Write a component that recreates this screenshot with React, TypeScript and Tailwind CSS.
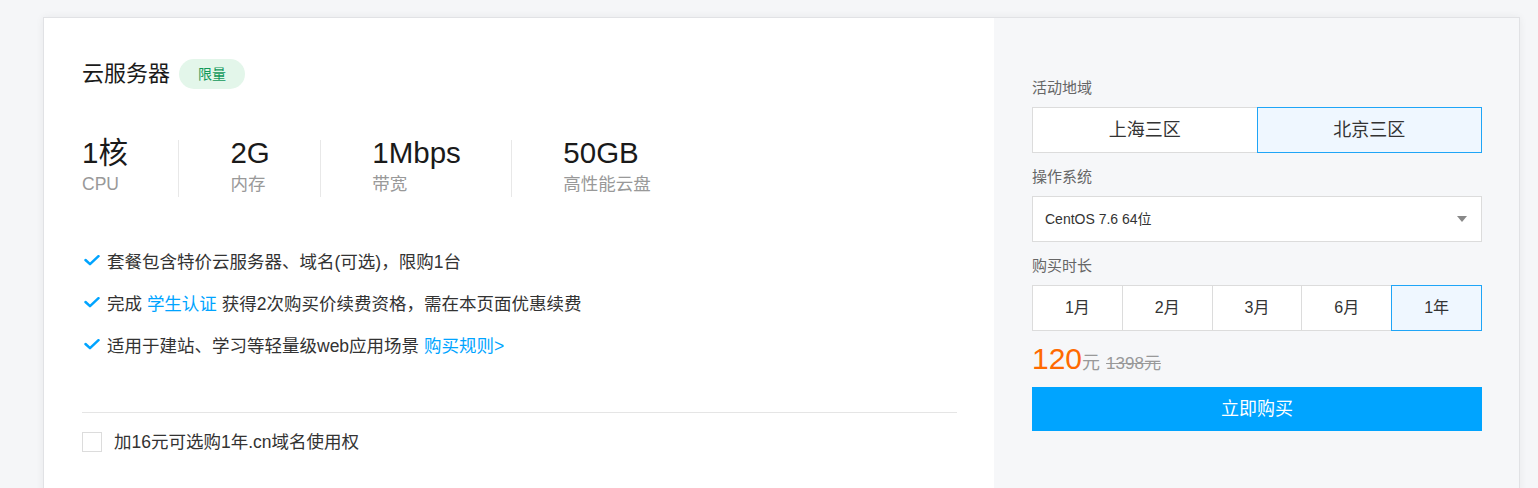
export default function App() {
  const specs = [
    { value: '1核', label: 'CPU' },
    { value: '2G', label: '内存' },
    { value: '1Mbps', label: '带宽' },
    { value: '50GB', label: '高性能云盘' },
  ];

  const durations = ['1月', '2月', '3月', '6月', '1年'];

  const Check = () => (
    <svg viewBox="0 0 16 11" className="w-[16px] h-[11px] shrink-0 mr-[7px] -mt-[3px]" fill="none">
      <path d="M1.5 5 L6 9.2 L14.5 1.2" stroke="#00a4ff" strokeWidth="2.5" strokeLinecap="round" strokeLinejoin="round" />
    </svg>
  );

  return (
    <div className="h-[488px] overflow-hidden bg-[#f5f6f8] pt-[17px] pl-[43px] font-['Liberation_Sans','Noto_Sans_CJK_SC',sans-serif] text-[#333]">
      <div className="w-[1477px] h-[480px] flex bg-white border border-[#e1e2e5] shadow-[0_0_8px_rgba(0,0,0,0.06)]">
        {/* Left: product info */}
        <div className="w-[950px] shrink-0 pl-[38px] pr-[37px] pt-[41px]">
          <div className="flex items-center h-[30px]">
            <span className="text-[22px] leading-[30px] text-[#1a1a1a]">云服务器</span>
            <span className="ml-[9px] h-[30px] px-[19px] rounded-full bg-[#e3f6ea] text-[#12995a] text-[14px] leading-[30px]">
              限量
            </span>
          </div>

          <div className="flex mt-[51px] h-[57px]">
            {specs.map((s, i) => (
              <div
                key={s.label}
                className={i === 0 ? 'pr-[50px]' : 'pl-[51.5px] pr-[50px] border-l border-[#e8e8e8]'}
              >
                <div className="text-[29.5px] leading-[26px] text-[#1a1a1a] whitespace-nowrap">{s.value}</div>
                <div className="mt-[7px] text-[17.5px] leading-[22px] text-[#999] whitespace-nowrap">{s.label}</div>
              </div>
            ))}
          </div>

          <div className="mt-[54px] flex flex-col gap-[20px] text-[17.5px] leading-[22px]">
            <div className="flex items-center pl-[2px]">
              <Check />
              <span>套餐包含特价云服务器、域名(可选)，限购1台</span>
            </div>
            <div className="flex items-center pl-[2px]">
              <Check />
              <span>
                完成 <span className="text-[#00a4ff]">学生认证</span> 获得2次购买价续费资格，需在本页面优惠续费
              </span>
            </div>
            <div className="flex items-center pl-[2px]">
              <Check />
              <span>
                适用于建站、学习等轻量级web应用场景 <span className="text-[#00a4ff]">购买规则&gt;</span>
              </span>
            </div>
          </div>

          <div className="mt-[55px] border-t border-[#e5e5e5]" />

          <label className="mt-[18px] flex items-center">
            <span className="w-[20px] h-[20px] border border-[#dcdcdc] bg-white" />
            <span className="ml-[12px] text-[17.5px] leading-[22px]">加16元可选购1年.cn域名使用权</span>
          </label>
        </div>

        {/* Right: purchase panel */}
        <div className="flex-1 bg-[#f6f7f9] pl-[38px] pt-[60px]">
          <div className="w-[450px]">
            <div className="text-[15px] leading-[20px] text-[#666]">活动地域</div>
            <div className="mt-[9px] flex">
              <button className="w-[226px] h-[46px] border border-[#dcdcdc] bg-white text-[18px] text-[#333]">上海三区</button>
              <button className="relative z-10 -ml-px w-[226px] h-[46px] border border-[#1fa5f7] bg-[#eff7ff] text-[18px] text-[#333]">
                北京三区
              </button>
            </div>

            <div className="mt-[14px] text-[15px] leading-[20px] text-[#666]">操作系统</div>
            <div className="mt-[9px] h-[46px] flex items-center justify-between border border-[#dcdcdc] bg-white pl-[12px] pr-[14px]">
              <span className="text-[14px] text-[#333]">CentOS 7.6 64位</span>
              <svg viewBox="0 0 10 6" className="w-[10px] h-[6px]">
                <path d="M0 0 H10 L5 6 Z" fill="#888" />
              </svg>
            </div>

            <div className="mt-[14px] text-[15px] leading-[20px] text-[#666]">购买时长</div>
            <div className="mt-[9px] flex">
              {durations.map((d, i) => (
                <button
                  key={d}
                  className={
                    i === 4
                      ? 'relative z-10 -ml-px w-[91px] h-[46px] border border-[#1fa5f7] bg-[#eff7ff] text-[16px] text-[#333]'
                      : i === 0
                        ? 'w-[91px] h-[46px] border border-[#dcdcdc] bg-white text-[16px] text-[#333]'
                        : '-ml-px w-[91px] h-[46px] border border-[#dcdcdc] bg-white text-[16px] text-[#333]'
                  }
                >
                  {d}
                </button>
              ))}
            </div>

            <div className="mt-[13px] flex items-baseline leading-[30px]">
              <span className="text-[30px] text-[#ff6a00]">120</span>
              <span className="text-[18px] text-[#999]">元</span>
              <span className="ml-[6px] text-[17px] text-[#999] line-through">1398元</span>
            </div>

            <button className="mt-[8px] w-[450px] h-[44px] bg-[#00a4ff] text-white text-[18px]">立即购买</button>
          </div>
        </div>
      </div>
    </div>
  );
}
